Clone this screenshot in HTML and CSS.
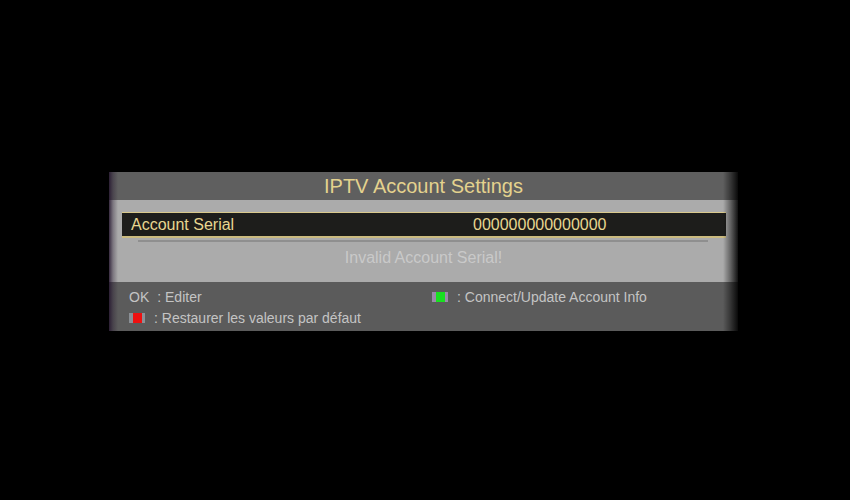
FILE: index.html
```html
<!DOCTYPE html>
<html lang="fr">
    <head>
        <meta charset="UTF-8" />
        <meta name="viewport" content="width=device-width, initial-scale=1.0"/>
        <title>IPTV Account Settings</title>
        <link rel="stylesheet" href="styles.css">
    </head>
    <body>
        <div class="panel">
            <div class="title">IPTV Account Settings</div>
            <div class="content">
                <div class="row selected">
                    <span class="label">Account Serial</span>
                    <span class="value">000000000000000</span>
                </div>
                <div class="underline"></div>
                <div class="message">Invalid Account Serial!</div>
            </div>
            <div class="footer">
                <div class="hint"><span class="key-text">OK</span> : Editer</div>
                <div class="hint"><span class="key green"><i></i></span> : Connect/Update Account Info</div>
                <div class="hint"><span class="key red"><i></i></span> : Restaurer les valeurs par défaut</div>
            </div>
        </div>
    </body>
</html>
```

FILE: styles.css
```css
* {
    margin: 0;
    padding: 0;
    box-sizing: border-box;
}

body {
    background: #000;
    font-family: 'Liberation Sans', Arial, sans-serif;
    width: 850px;
    height: 500px;
    overflow: hidden;
}

.panel {
    position: relative;
    margin: 172px 0 0 109px;
    width: 629px;
}

/* darker shading on the left and right edges of the box */
.panel::after {
    content: '';
    position: absolute;
    inset: 0;
    pointer-events: none;
    background: linear-gradient(to right, rgba(35, 20, 45, 0.85) 0px, rgba(35, 20, 45, 0.35) 4px, rgba(0, 0, 0, 0) 9px, rgba(0, 0, 0, 0) 614px, rgba(0, 0, 0, 0.45) 622px, rgba(0, 0, 0, 0.9) 629px);
}

.title {
    height: 28px;
    background: #5f5f5f;
    color: #e4d28e;
    font-size: 20px;
    text-align: center;
    line-height: 28px;
}

.content {
    height: 82px;
    background: #ababab;
    padding-top: 12px;
}

.row {
    margin: 0 12px 0 13px;
    height: 26px;
    display: grid;
    grid-template-columns: 342px 1fr;
    align-items: center;
    padding-left: 9px;
    font-size: 16px;
}

.selected {
    background: #1d1d1b;
    border-top: 1px solid #d9c98c;
    border-bottom: 2px solid #cbbb80;
    color: #e8d690;
}

.underline {
    height: 2px;
    margin: 2px 30px 0 29px;
    background: #8f8f8f;
}

.message {
    text-align: center;
    color: #c9c9c9;
    font-size: 16px;
    margin-top: 7px;
}

.footer {
    height: 49px;
    background: #5b5b5b;
    padding: 6px 0 0 20px;
    display: grid;
    grid-template-columns: 303px 1fr;
    row-gap: 4px;
    align-content: start;
    color: #c4c4c4;
    font-size: 14px;
}

.hint {
    display: flex;
    align-items: center;
    gap: 6px;
    height: 17px;
}

.key-text {
    margin-right: 2px;
}

.key {
    width: 16px;
    height: 10px;
    background: #8a8f95;
    display: flex;
    justify-content: center;
    align-items: center;
    margin-right: 3px;
}

.key i {
    width: 9px;
    height: 10px;
}

.red i {
    background: #ee1010;
}

.green i {
    background: #18e020;
}

.green {
    background: #9a88a8;
}
```
